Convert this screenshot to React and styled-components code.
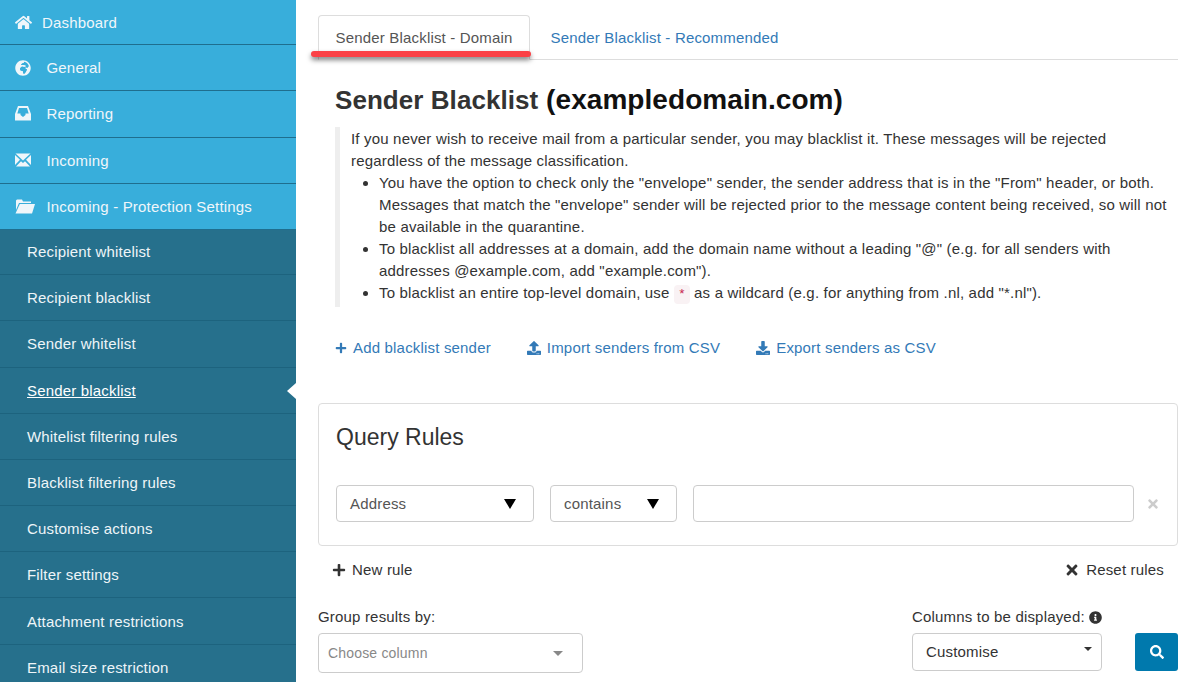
import styled, { createGlobalStyle } from 'styled-components'
import {
  FaHome,
  FaGlobeAfrica,
  FaPlus,
  FaTimes,
  FaUpload,
  FaDownload,
  FaInfoCircle,
  FaSearch,
} from 'react-icons/fa'

const GlobalStyle = createGlobalStyle`
  html, body {
    margin: 0;
    height: 100%;
    overflow: hidden;
    background: #fff;
    font-family: "Liberation Sans", Arial, sans-serif;
  }
`

const Page = styled.div`
  display: flex;
  width: 1189px;
  height: 682px;
  overflow: hidden;
  letter-spacing: 0.18px;
`

const Sidebar = styled.nav`
  width: 296px;
  flex: none;
  background: #26708c;
`

const TopItem = styled.div`
  display: flex;
  align-items: center;
  height: ${({ $first }) => ($first ? '44.2px' : '45.2px')};
  border-bottom: 1px solid #1f6e8e;
  background: #38aedb;
  color: #f0f6fa;
  font-size: 15px;
  padding-left: 15px;
`

const IconSlot = styled.span`
  display: flex;
  width: ${({ $narrow }) => ($narrow ? '27px' : '31.5px')};
  flex: none;
  font-size: 16px;
`

const SubItem = styled.div`
  position: relative;
  display: flex;
  align-items: center;
  box-sizing: border-box;
  height: ${({ $first }) => ($first ? '45.2px' : '46.2px')};
  padding: 0 0 ${({ $first }) => ($first ? '2px' : '0')} 27px;
  border-bottom: 1px solid #1d637e;
  font-size: 15px;
  text-decoration: ${({ $active }) => ($active ? 'underline' : 'none')};
  color: ${({ $active }) => ($active ? '#fff' : '#eef5f8')};
`

const Caret = styled.span`
  position: absolute;
  right: 0;
  top: 15px;
  border: 8px solid transparent;
  border-left: 0;
  border-right: 9px solid #fff;
`

const Main = styled.main`
  position: relative;
  flex: 1;
  padding: 15px 11px 0 22px;
  min-width: 0;
  color: #333;
`

const Tabs = styled.div`
  display: flex;
  height: 44px;
  border-bottom: 1px solid #ddd;
`

const Tab = styled.div`
  box-sizing: border-box;
  height: ${({ $active }) => ($active ? '45px' : '44px')};
  padding: 13px 16.5px 0;
  margin-right: ${({ $active }) => ($active ? '3px' : '0')};
  font-size: 15px;
  color: ${({ $active }) => ($active ? '#555' : '#337ab7')};
  background: ${({ $active }) => ($active ? '#fff' : 'transparent')};
  border: 1px solid ${({ $active }) => ($active ? '#ddd' : 'transparent')};
  border-bottom-color: ${({ $active }) => ($active ? '#fff' : 'transparent')};
  border-radius: 4px 4px 0 0;
`

const RedMark = styled.span`
  position: absolute;
  left: 15px;
  top: 51px;
  width: 220px;
  height: 6px;
  border-radius: 3px;
  background: #fb4146;
  box-shadow: 0 3px 5px rgba(0, 0, 0, 0.5);
`

const Heading = styled.h1`
  margin: 23px 0 0 17px;
  font-size: 28px;
  line-height: 33px;
  font-weight: 700;
  color: #111;
  letter-spacing: 0.06px;
`

const HeadingLead = styled.span`
  font-size: 26px;
  color: #333;
`

const Note = styled.div`
  margin: 10px 3px 0 17px;
  padding: 1px 0 1px 11px;
  border-left: 5px solid #eee;
  font-size: 15px;
  line-height: 22px;
  color: #333;
`

const NoteList = styled.ul`
  margin: 0;
  padding-left: 28px;
`

const Code = styled.code`
  padding: 2px 4px;
  font-family: "Liberation Mono", monospace;
  font-size: 13px;
  letter-spacing: 0;
  color: #c7254e;
  background: #f9f2f4;
  border-radius: 4px;
`

const Actions = styled.div`
  display: flex;
  gap: 36px;
  margin: 30px 0 0 17px;
`

const ActionLink = styled.span`
  display: inline-flex;
  align-items: center;
  gap: 6px;
  font-size: 15px;
  line-height: 22px;
  color: #337ab7;
`

const RulesPanel = styled.section`
  box-sizing: border-box;
  height: 143px;
  margin-top: 44px;
  padding: 17px 17px 0;
  border: 1px solid #ddd;
  border-radius: 4px;
`

const PanelTitle = styled.h3`
  margin: 0;
  font-size: 23px;
  line-height: 33px;
  font-weight: 400;
  letter-spacing: 0;
  color: #333;
`

const RuleRow = styled.div`
  display: flex;
  align-items: center;
  gap: 16px;
  margin-top: 31px;
`

const Field = styled.div`
  box-sizing: border-box;
  display: flex;
  flex: none;
  align-items: center;
  justify-content: space-between;
  width: ${({ $width }) => $width}px;
  height: ${({ $height }) => $height || 37}px;
  padding: 0 ${({ $pad }) => $pad || 17}px ${({ $bottom }) => $bottom || 0}px ${({ $left }) => $left || 13}px;
  border: 1px solid #ccc;
  border-radius: 4px;
  background: #fff;
  font-size: ${({ $size }) => $size || 15}px;
  color: ${({ $color }) => $color || '#555'};
`

const TextBox = styled.input`
  box-sizing: border-box;
  flex: none;
  width: 441px;
  height: 37px;
  padding: 0 12px;
  border: 1px solid #ccc;
  border-radius: 4px;
  outline: none;
`

const Arrow = styled.span`
  margin-bottom: ${({ $lift }) => $lift || 0}px;
  border-style: solid;
  border-color: ${({ $color }) => $color || '#000'} transparent transparent;
  border-width: ${({ $h }) => $h}px ${({ $w }) => $w}px 0;
`

const RemoveRule = styled.span`
  display: flex;
  margin-left: -4px;
  font-size: 14px;
  color: #ccc;
`

const RuleActions = styled.div`
  display: flex;
  justify-content: space-between;
  padding: 0 14px;
  margin-top: 13px;
`

const PlainAction = styled.span`
  display: inline-flex;
  align-items: center;
  gap: 6px;
  font-size: 15px;
  line-height: 22px;
  color: #333;
`

const Filters = styled.div`
  display: flex;
  justify-content: space-between;
  align-items: flex-start;
  margin-top: 25px;
`

const FilterGroup = styled.div`
  display: flex;
  flex-direction: column;
  gap: 5px;
`

const FilterLabel = styled.label`
  display: flex;
  align-items: center;
  gap: 4px;
  font-size: 15px;
  line-height: 22px;
  color: #333;
`

const FilterEnd = styled.div`
  display: flex;
  align-items: flex-end;
  gap: 33px;
`

const SearchButton = styled.button`
  display: flex;
  align-items: center;
  justify-content: center;
  width: 43px;
  height: 38px;
  padding: 0;
  border: 0;
  border-radius: 3px;
  background: #0079ad;
  color: #fff;
  font-size: 14px;
`

const InboxIcon = () => (
  <svg width="16" height="15" viewBox="0 0 16 15" fill="currentColor">
    <path
      fillRule="evenodd"
      d="M3 0h10l3 8v6.500H0V8L3 0zm1 2L2.300 7.500H5.500V9L8 11l2.500-2V7.500h3.200L12 2H4z"
    />
  </svg>
)

const EnvelopeIcon = () => (
  <svg width="16" height="14" viewBox="0 0 16 14" fill="currentColor">
    <path d="M0.500 0.500h15L8 7.500z" />
    <path d="M0 2v10l5-5.200z" />
    <path d="M16 2v10l-5-5.200z" />
    <path d="M1 13.500l5-5.300 2 1.800 2-1.800 5 5.300z" />
  </svg>
)

const FolderIcon = () => (
  <svg width="20" height="15" viewBox="0 0 20 15" fill="currentColor">
    <path d="M1 11V1.500L2 0.500h5l1 2h8v1.500H4z" />
    <path d="M4.800 5H20l-3 9.500H0.500z" />
  </svg>
)

const topItems = [
  { label: 'General', icon: <FaGlobeAfrica /> },
  { label: 'Reporting', icon: <InboxIcon /> },
  { label: 'Incoming', icon: <EnvelopeIcon /> },
  { label: 'Incoming - Protection Settings', icon: <FolderIcon /> },
]

const subItems = [
  'Recipient whitelist',
  'Recipient blacklist',
  'Sender whitelist',
  'Sender blacklist',
  'Whitelist filtering rules',
  'Blacklist filtering rules',
  'Customise actions',
  'Filter settings',
  'Attachment restrictions',
  'Email size restriction',
]

const App = () => {
  return (
    <Page>
      <GlobalStyle />
      <Sidebar>
        <TopItem $first>
          <IconSlot $narrow>
            <FaHome size={17} />
          </IconSlot>
          Dashboard
        </TopItem>
        {topItems.map(({ label, icon }) => (
          <TopItem key={label}>
            <IconSlot>{icon}</IconSlot>
            {label}
          </TopItem>
        ))}
        {subItems.map((label, index) => (
          <SubItem
            key={label}
            $first={index === 0}
            $active={label === 'Sender blacklist'}
          >
            {label}
            {label === 'Sender blacklist' && <Caret />}
          </SubItem>
        ))}
      </Sidebar>
      <Main>
        <Tabs>
          <Tab $active>Sender Blacklist - Domain</Tab>
          <Tab>Sender Blacklist - Recommended</Tab>
        </Tabs>
        <RedMark />
        <Heading>
          <HeadingLead>Sender Blacklist</HeadingLead> (exampledomain.com)
        </Heading>
        <Note>
          If you never wish to receive mail from a particular sender, you may
          blacklist it. These messages will be rejected regardless of the
          message classification.
          <NoteList>
            <li>
              You have the option to check only the "envelope" sender, the
              sender address that is in the "From" header, or both. Messages
              that match the "envelope" sender will be rejected prior to the
              message content being received, so will not be available in the
              quarantine.
            </li>
            <li>
              To blacklist all addresses at a domain, add the domain name
              without a leading "@" (e.g. for all senders with addresses
              @example.com, add "example.com").
            </li>
            <li>
              To blacklist an entire top-level domain, use <Code>*</Code> as a
              wildcard (e.g. for anything from .nl, add "*.nl").
            </li>
          </NoteList>
        </Note>
        <Actions>
          <ActionLink>
            <FaPlus size={12} />
            Add blacklist sender
          </ActionLink>
          <ActionLink>
            <FaUpload size={14} />
            Import senders from CSV
          </ActionLink>
          <ActionLink>
            <FaDownload size={14} />
            Export senders as CSV
          </ActionLink>
        </Actions>
        <RulesPanel>
          <PanelTitle>Query Rules</PanelTitle>
          <RuleRow>
            <Field $width={198}>
              Address
              <Arrow $h={10} $w={6.5} />
            </Field>
            <Field $width={127}>
              contains
              <Arrow $h={10} $w={6.5} />
            </Field>
            <TextBox />
            <RemoveRule>
              <FaTimes />
            </RemoveRule>
          </RuleRow>
        </RulesPanel>
        <RuleActions>
          <PlainAction>
            <FaPlus size={14} />
            New rule
          </PlainAction>
          <PlainAction>
            <FaTimes size={16} />
            Reset rules
          </PlainAction>
        </RuleActions>
        <Filters>
          <FilterGroup>
            <FilterLabel>Group results by:</FilterLabel>
            <Field $width={265} $height={40} $left={9} $pad={19} $size={14} $color="#888">
              Choose column
              <Arrow $color="#888" $h={5} $w={5} />
            </Field>
          </FilterGroup>
          <FilterEnd>
            <FilterGroup>
              <FilterLabel>
                Columns to be displayed:
                <FaInfoCircle size={13} />
              </FilterLabel>
              <Field $width={190} $height={38} $pad={9} $bottom={2} $color="#333">
                Customise
                <Arrow $color="#333" $h={4} $w={4} $lift={4} />
              </Field>
            </FilterGroup>
            <SearchButton>
              <FaSearch />
            </SearchButton>
          </FilterEnd>
        </Filters>
      </Main>
    </Page>
  )
}

export default App
